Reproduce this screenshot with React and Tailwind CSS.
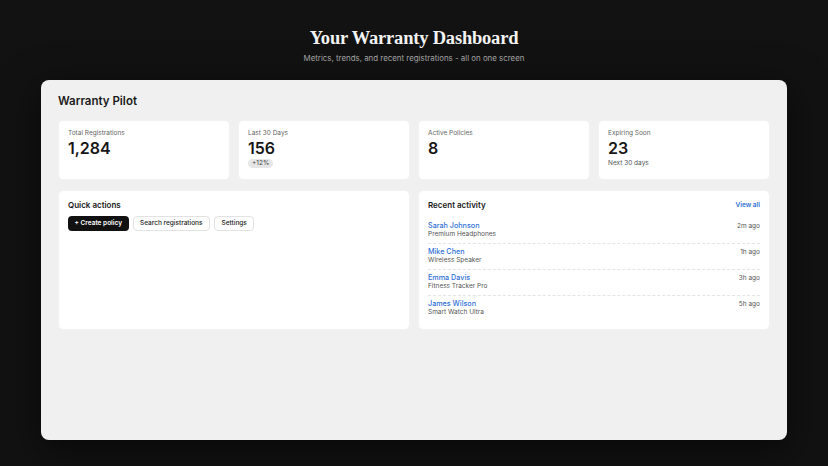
export default function App() {
  const stats = [
    { label: "Total Registrations", value: "1,284" },
    { label: "Last 30 Days", value: "156", badge: "+12%" },
    { label: "Active Policies", value: "8" },
    { label: "Expiring Soon", value: "23", note: "Next 30 days" },
  ];
  const activity = [
    { name: "Sarah Johnson", product: "Premium Headphones", time: "2m ago" },
    { name: "Mike Chen", product: "Wireless Speaker", time: "1h ago" },
    { name: "Emma Davis", product: "Fitness Tracker Pro", time: "3h ago" },
    { name: "James Wilson", product: "Smart Watch Ultra", time: "5h ago" },
  ];
  return (
    <div
      className="w-[828px] h-[466px] bg-[#121212] flex flex-col items-center overflow-hidden"
      style={{ fontFamily: "Inter, 'Noto Sans', sans-serif" }}
    >
      <h1
        className="mt-[27px] text-[18.5px] leading-[22px] font-bold text-[#f2f2f2] tracking-[-0.2px]"
        style={{ fontFamily: "'Liberation Serif', 'DejaVu Serif', serif" }}
      >
        Your Warranty Dashboard
      </h1>
      <p className="mt-[3px] text-[7.9px] leading-[12px] text-[#a8a8a8]">
        Metrics, trends, and recent registrations - all on one screen
      </p>
      <div className="mt-[16px] w-[746px] h-[360px] bg-[#f0f0f0] rounded-[8px] shadow-[0_10px_40px_rgba(0,0,0,0.6)] px-[17px] pt-[13px]">
        <h2 className="text-[11.5px] leading-[16px] font-semibold text-[#1a1a1a]">Warranty Pilot</h2>
        <div className="mt-[11px] grid grid-cols-4 gap-[8px]">
          {stats.map((s) => (
            <div key={s.label} className="bg-white rounded-[5px] h-[60px] px-[9px] pt-[8px] border border-[#f2f2f2]">
              <div className="text-[6.5px] leading-[8px] text-[#666]">{s.label}</div>
              <div className="mt-[3px] text-[16px] leading-[16px] font-semibold text-[#161616]">{s.value}</div>
              {s.badge && (
                <div className="mt-[3px] w-fit bg-[#e6e6e6] rounded-full px-[4px] text-[6.5px] leading-[9px] text-[#444]">
                  {s.badge}
                </div>
              )}
              {s.note && <div className="mt-[3px] text-[6.5px] leading-[8px] text-[#555]">{s.note}</div>}
            </div>
          ))}
        </div>
        <div className="mt-[10px] grid grid-cols-2 gap-[8px]">
          <div className="bg-white rounded-[5px] h-[140px] px-[9px] pt-[9px] border border-[#f2f2f2]">
            <div className="text-[8px] leading-[10px] font-semibold text-[#1a1a1a]">Quick actions</div>
            <div className="mt-[6px] flex gap-[4px]">
              <button className="h-[15px] px-[6.5px] rounded-[4px] bg-[#111] text-white text-[6.5px] font-semibold leading-none">
                + Create policy
              </button>
              <button className="h-[15px] px-[6.5px] rounded-[4px] bg-white border border-[#e2e2e2] text-[#222] text-[6.5px] font-medium leading-none">
                Search registrations
              </button>
              <button className="h-[15px] px-[6.5px] rounded-[4px] bg-white border border-[#e2e2e2] text-[#222] text-[6.5px] font-medium leading-none">
                Settings
              </button>
            </div>
          </div>
          <div className="bg-white rounded-[5px] h-[140px] px-[9px] pt-[9px] border border-[#f2f2f2]">
            <div className="flex justify-between items-center">
              <div className="text-[8px] leading-[10px] font-semibold text-[#1a1a1a]">Recent activity</div>
              <div className="text-[6.5px] leading-[10px] font-semibold text-[#2f6fd6]">View all</div>
            </div>
            <div className="mt-[8px]">
              {activity.map((a, i) => (
                <div
                  key={a.name}
                  className={
                    "flex justify-between h-[26px] pt-[4px] " +
                    (i < activity.length - 1 ? "border-b border-dashed border-[#e4e4e4]" : "")
                  }
                >
                  <div>
                    <div className="text-[7.2px] leading-[8px] font-medium text-[#2f6fd6]">{a.name}</div>
                    <div className="text-[6.5px] leading-[8px] text-[#555]">{a.product}</div>
                  </div>
                  <div className="text-[6.5px] leading-[8px] text-[#555]">{a.time}</div>
                </div>
              ))}
            </div>
          </div>
        </div>
      </div>
    </div>
  );
}
